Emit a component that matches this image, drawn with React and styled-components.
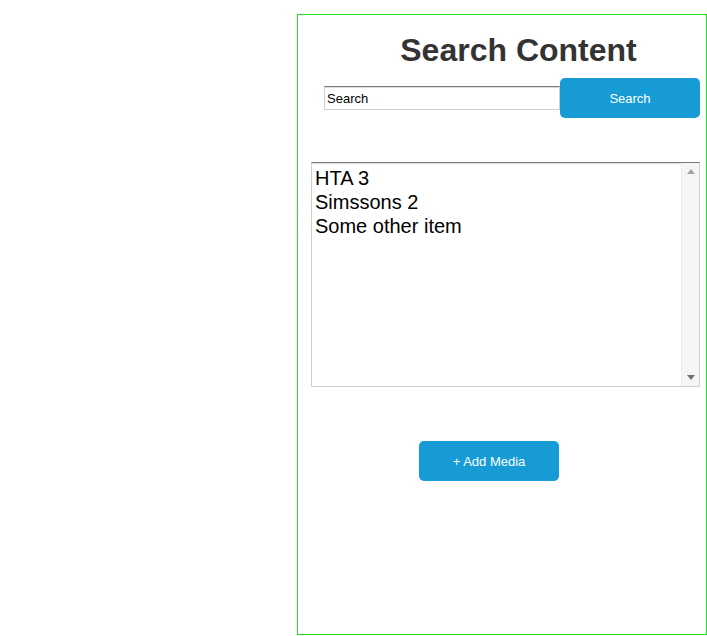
import React from "react";
import styled, { createGlobalStyle } from "styled-components";

const GlobalStyle = createGlobalStyle`
  html, body {
    margin: 0;
    padding: 0;
    background: #fff;
    font-family: "Liberation Sans", Arial, sans-serif;
  }
`;

const items = ["HTA 3", "Simssons 2", "Some other item"];

function App() {
  return (
    <>
      <GlobalStyle />
      <Page>
        <Panel>
          <Title>Search Content</Title>
          <SearchRow>
            <SearchInput defaultValue="Search" />
            <BlueButton>Search</BlueButton>
          </SearchRow>
          <ListBox>
            <Items>
              {items.map((item) => (
                <Item key={item}>{item}</Item>
              ))}
            </Items>
            <ScrollTrack>
              <Arrow $dir="up" />
              <Arrow $dir="down" />
            </ScrollTrack>
          </ListBox>
          <AddRow>
            <BlueButton>+ Add Media</BlueButton>
          </AddRow>
        </Panel>
      </Page>
    </>
  );
}

const Page = styled.div`
  display: flex;
  padding-top: 14px;
  padding-left: 297px;
`;

const Panel = styled.div`
  box-sizing: border-box;
  width: 410px;
  height: 621px;
  border: 1px solid #22dd22;
  display: flex;
  flex-direction: column;
`;

const Title = styled.h1`
  margin: 17px 0 0 33px;
  font-size: 32px;
  line-height: 37px;
  font-weight: bold;
  color: #333333;
  text-align: center;
`;

const SearchRow = styled.div`
  display: flex;
  align-items: center;
  margin: 9px 0 0 26px;
`;

const SearchInput = styled.input`
  box-sizing: border-box;
  width: 236px;
  height: 24px;
  padding: 0 2px;
  border: 1px solid #cfcfcf;
  border-top-color: #7a7a7a;
  box-shadow: inset 0 1px 0 #dcdcdc;
  font-family: "Liberation Sans", Arial, sans-serif;
  font-size: 13px;
  color: #000;
  outline: none;
`;

const BlueButton = styled.button`
  box-sizing: border-box;
  width: 140px;
  height: 40px;
  border: 0;
  border-radius: 5px;
  background: #169bd5;
  color: #fff;
  font-family: "Liberation Sans", Arial, sans-serif;
  font-size: 13px;
  cursor: pointer;
`;

const ListBox = styled.div`
  box-sizing: border-box;
  display: flex;
  width: 389px;
  height: 225px;
  margin: 44px 0 0 13px;
  border: 1px solid #cfcfcf;
  border-top-color: #7a7a7a;
  box-shadow: inset 0 1px 0 #dcdcdc;
  background: #fff;
`;

const Items = styled.div`
  flex: 1;
  padding: 3px 3px;
`;

const Item = styled.div`
  font-size: 20px;
  line-height: 24px;
  color: #000;
`;

const ScrollTrack = styled.div`
  width: 17px;
  background: #f5f5f5;
  border-left: 1px solid #ececec;
  display: flex;
  flex-direction: column;
  justify-content: space-between;
  align-items: center;
  padding: 6px 0;
`;

const Arrow = styled.span`
  width: 0;
  height: 0;
  border-left: 4px solid transparent;
  border-right: 4px solid transparent;
  ${({ $dir }) =>
    $dir === "up"
      ? "border-bottom: 5px solid #a3a3a3;"
      : "border-top: 5px solid #6e6e6e;"}
`;

const AddRow = styled.div`
  display: flex;
  margin: 54px 0 0 121px;
`;

export default App;
